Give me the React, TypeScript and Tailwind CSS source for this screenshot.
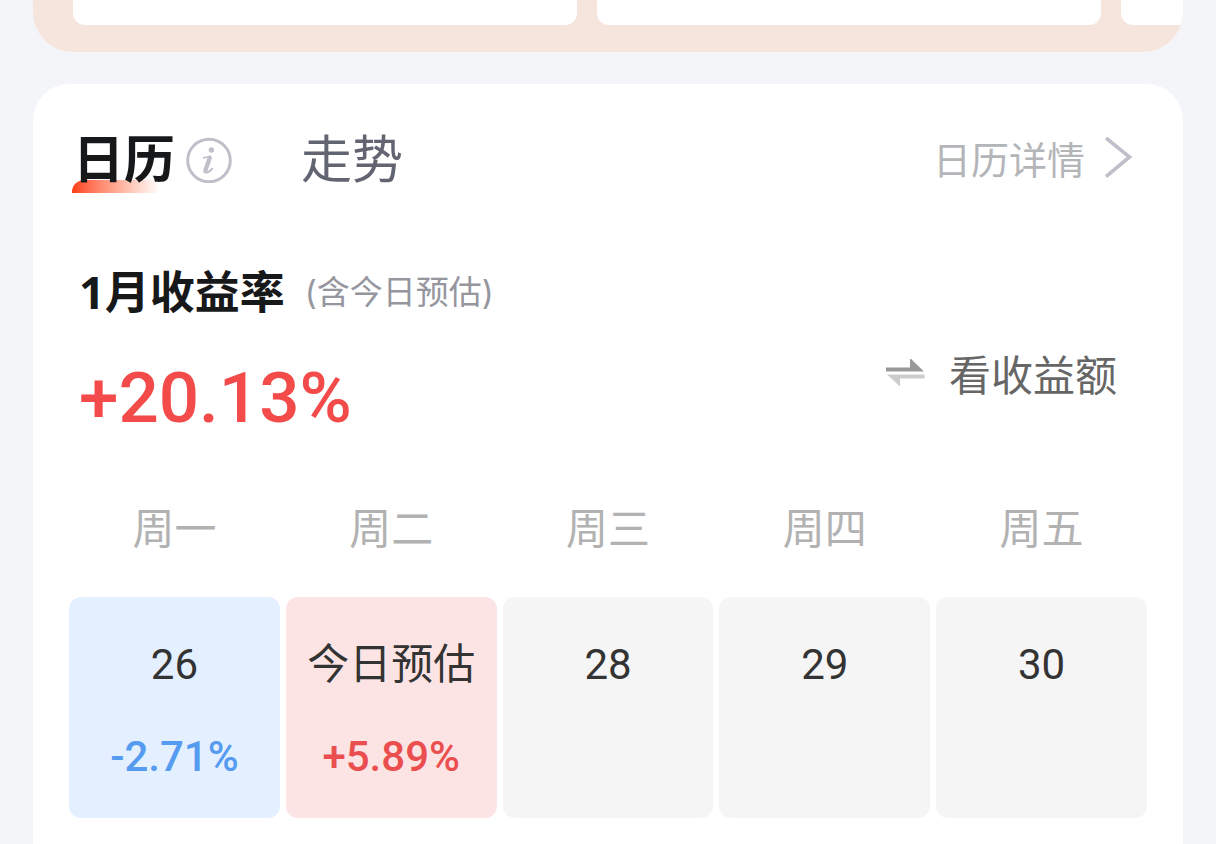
import { useState } from 'react';
import clsx from 'clsx';

type Day = {
  weekday: string;
  label: string;
  rate?: string;
};

const days: Day[] = [
  { weekday: '周一', label: '26', rate: '-2.71%' },
  { weekday: '周二', label: '今日预估', rate: '+5.89%' },
  { weekday: '周三', label: '28' },
  { weekday: '周四', label: '29' },
  { weekday: '周五', label: '30' },
];

function InfoIcon() {
  return (
    <svg viewBox="0 0 46 46" className="size-[46px]" fill="none" stroke="#bfbfca" aria-hidden="true">
      <circle cx="23" cy="23.5" r="21.3" strokeWidth="3" />
      <circle cx="25.4" cy="13" r="2.7" fill="#bfbfca" stroke="none" />
      <path d="M17 20.800 C20 20.600 22 20 24.800 19" strokeWidth="1.800" />
      <path d="M24.200 19.500 L19.200 34" strokeWidth="4.200" />
      <path d="M18 33.500 C18.500 37 23 36 26.600 31.200" strokeWidth="2" />
    </svg>
  );
}

function ChevronIcon() {
  return (
    <svg viewBox="0 0 28 46" className="h-[46px] w-7" fill="none" aria-hidden="true">
      <path d="M1 1 L24.500 20 L1 39.500" stroke="#bfbfca" strokeWidth="3.600" />
    </svg>
  );
}

function SwapIcon() {
  return (
    <svg viewBox="0 0 40 34" className="h-[34px] w-10" aria-hidden="true">
      <path d="M1 8.500 H25 V-1 L39 12.500 H1 Z" fill="#999999" />
      <path d="M39.500 15.500 H2 L15 27.500 V19.500 H39.500 Z" fill="#cccccc" />
    </svg>
  );
}

export default function App() {
  const [tab, setTab] = useState('calendar');

  return (
    <div className="flex min-h-screen flex-col overflow-hidden bg-[#f3f5f9] px-[33px] font-['Inter','Noto_Sans_CJK_SC',sans-serif]">
      <div className="flex h-[52px] items-start gap-5 overflow-hidden rounded-b-[40px] bg-[#f5e5dd] pl-10">
        <div className="h-[25px] w-[504px] shrink-0 rounded-b-xl bg-white" />
        <div className="h-[25px] w-[504px] shrink-0 rounded-b-xl bg-white" />
        <div className="h-[25px] w-[504px] shrink-0 rounded-b-xl bg-white" />
      </div>

      <main className="mt-8 flex-1 rounded-t-[36px] bg-white px-[30px] pt-12">
        <div className="flex h-14 items-center justify-between pr-5 pl-2.5">
          <div className="flex items-center">
            <button
              type="button"
              onClick={() => setTab('calendar')}
              className={clsx('relative isolate text-[51px] leading-[56px]', tab === 'calendar' ? 'font-bold text-[#17181a]' : 'text-[#626472]')}
            >
              日历
              {tab === 'calendar' && (
                <span className="absolute -bottom-[5px] -left-px -z-10 h-[13px] w-[88px] rounded-tl-xl bg-linear-to-r from-[#ff3b0d] to-white" />
              )}
            </button>
            <button type="button" aria-label="说明" className="ml-[11px]">
              <InfoIcon />
            </button>
            <button
              type="button"
              onClick={() => setTab('trend')}
              className={clsx('ml-[69px] text-[51px] leading-[56px]', tab === 'trend' ? 'font-bold text-[#17181a]' : 'text-[#626472]')}
            >
              走势
            </button>
          </div>
          <a href="#detail" className="flex items-center gap-5 text-[38px] leading-[56px] text-[#b4b5b9]">
            日历详情
            <ChevronIcon />
          </a>
        </div>

        <div className="mt-20 flex h-12 items-center gap-5 pl-4">
          <h2 className="font-['Noto_Sans','Noto_Sans_CJK_SC',sans-serif] text-[45px] leading-[48px] font-bold text-[#17181a]">1月收益率</h2>
          <span className="text-[33px] leading-[48px] text-[#96969e]">(含今日预估)</span>
        </div>

        <div className="mt-10 flex items-start justify-between pr-9 pl-4">
          <p className="font-['Roboto',sans-serif] text-[71px] leading-[84px] font-medium text-[#f34b4a]">+20.13%</p>
          <button type="button" className="flex items-center gap-6 text-[42px] leading-10 text-[#666666]">
            <SwapIcon />
            看收益额
          </button>
        </div>

        <table className="mt-[61px] w-full table-fixed border-separate border-spacing-x-[6px] border-spacing-y-0 text-center">
          <thead>
            <tr>
              {days.map((day) => (
                <th key={day.weekday} scope="col" className="p-0 pb-10 text-[42px] leading-[56px] font-normal text-[#b2b2b2]">
                  {day.weekday}
                </th>
              ))}
            </tr>
          </thead>
          <tbody>
            <tr>
              {days.map((day) => (
                <td
                  key={day.weekday}
                  className={clsx(
                    'rounded-xl px-0 pt-10 pb-[33px] align-top',
                    !day.rate && 'bg-[#f5f5f5]',
                    day.rate?.startsWith('-') && 'bg-[#e4f0ff]',
                    day.rate?.startsWith('+') && 'bg-[#fde4e4]'
                  )}
                >
                  <div className="font-['Roboto','Noto_Sans_CJK_SC',sans-serif] text-[42px] leading-[56px] whitespace-nowrap text-[#333333]">
                    {day.label}
                  </div>
                  {day.rate && (
                    <div
                      className={clsx(
                        "mt-9 font-['Roboto',sans-serif] text-[42px] leading-[56px] font-medium",
                        day.rate.startsWith('-') ? 'text-[#559cf0]' : 'text-[#eb4e4e]'
                      )}
                    >
                      {day.rate}
                    </div>
                  )}
                </td>
              ))}
            </tr>
          </tbody>
        </table>
      </main>
    </div>
  );
}
